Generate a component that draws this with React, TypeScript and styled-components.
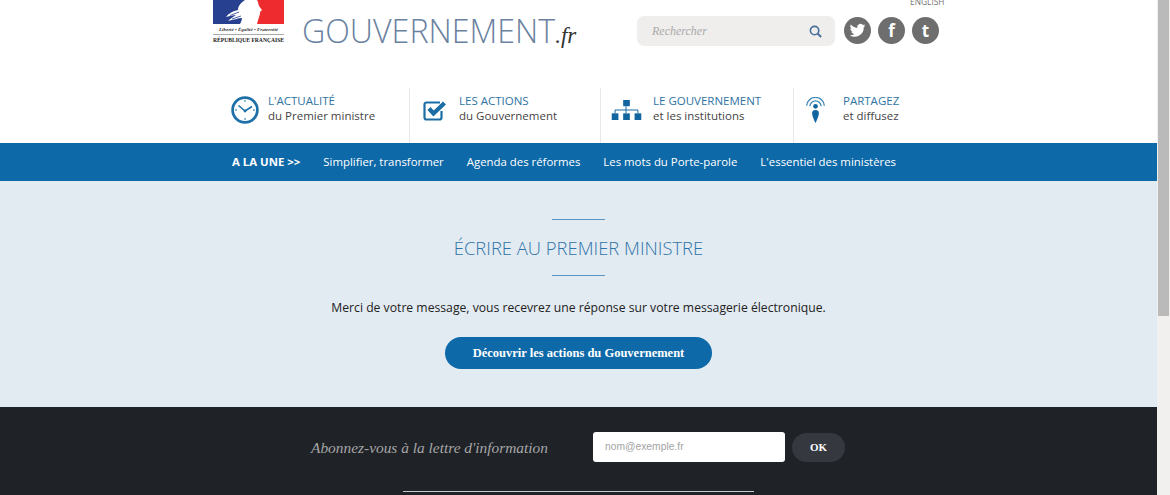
import React from "react";
import styled, { createGlobalStyle } from "styled-components";

const GlobalStyle = createGlobalStyle`
  html, body {
    margin: 0;
    padding: 0;
    height: 495px;
    overflow: hidden;
    background: #fff;
  }
  body {
    font-family: "Open Sans", "Liberation Sans", sans-serif;
  }
`;

const SANS = `"Open Sans", "Liberation Sans", sans-serif`;
const SERIF = `"Liberation Serif", "DejaVu Serif", serif`;

const navItems = [
  { title: "L'ACTUALITÉ", sub: "du Premier ministre", icon: "clock", width: 196, pad: 18, iconWidth: 28, gap: 9 },
  { title: "LES ACTIONS", sub: "du Gouvernement", icon: "check", width: 191, pad: 13, iconWidth: 24, gap: 12 },
  { title: "LE GOUVERNEMENT", sub: "et les institutions", icon: "org", width: 193, pad: 10, iconWidth: 31, gap: 11 },
  { title: "PARTAGEZ", sub: "et diffusez", icon: "share", width: 200, pad: 11, iconWidth: 21, gap: 17 },
];

const subLinks = [
  "Simplifier, transformer",
  "Agenda des réformes",
  "Les mots du Porte-parole",
  "L'essentiel des ministères",
];

const NavIcon = ({ name }: { name: string }) => {
  if (name === "clock") {
    return (
      <svg width="28" height="28" viewBox="0 0 28 28" fill="none" stroke="#1e71a8">
        <circle cx="14" cy="14" r="12.4" strokeWidth="2.7" />
        <path d="M14 15 L7.5 9.5 M14 15 L21 10.5" strokeWidth="1.6" />
        <circle cx="14" cy="15" r="1.4" fill="#1e71a8" stroke="none" />
        <path d="M14 4v2M14 22v2M4 14h2M22 14h2" strokeWidth="1" />
      </svg>
    );
  }
  if (name === "check") {
    return (
      <svg width="24" height="24" viewBox="0 0 24 24" fill="none">
        <path d="M18.5 13v6.500a2 2 0 0 1-2 2H3.500a2 2 0 0 1-2-2V6.500a2 2 0 0 1 2-2H17" stroke="#1b6ea5" strokeWidth="2.2" />
        <path d="M6 10.500l4.500 5L21.500 5" stroke="#1b6ea5" strokeWidth="4.2" />
      </svg>
    );
  }
  if (name === "org") {
    return (
      <svg width="31" height="20" viewBox="0 0 31 21" fill="#12659f">
        <rect x="12" y="0" width="7" height="6.500" />
        <rect x="0" y="14" width="7" height="7" />
        <rect x="12" y="14" width="7" height="7" />
        <rect x="24" y="14" width="7" height="7" />
        <path d="M15 6.500v7.500M3.500 14v-3.500h24V14" fill="none" stroke="#12659f" strokeWidth="1" />
      </svg>
    );
  }
  return (
    <svg width="21" height="27" viewBox="0 0 21 29" fill="none">
      <path d="M1 9.500a9.500 9 0 0 1 19 0" stroke="#3f86b5" strokeWidth="1.4" />
      <path d="M4.500 10a6 5.800 0 0 1 12 0" stroke="#3f86b5" strokeWidth="1.4" />
      <circle cx="10.5" cy="10" r="2.5" fill="#12659f" />
      <path d="M10.500 14c2.700 0 4 1.700 3.600 4.200-.4 2.800-2.200 7-3.600 9.800-1.400-2.800-3.200-7-3.600-9.800C6.500 15.700 7.800 14 10.500 14z" fill="#12659f" />
    </svg>
  );
};

export default function App() {
  return (
    <>
      <GlobalStyle />
      <Screen>
        <Page>
          <TopBar>
            <Logo>
              <svg width="71" height="24" viewBox="0 0 71 24">
                <rect width="33" height="24" fill="#27408f" />
                <path d="M32 0C27 3 25 7 25 10 20 11 15 14 13 17 17 16 20 15 23 15 20 17 17 19 15 21 20 20 25 18 29 18 29 20 28 22 27 24H45V0Z" fill="#fff" />
                <path d="M17 15.500l9-3.500M19 19l9-3" stroke="#27408f" strokeWidth="0.8" />
                <path d="M44 0H71V24H44C45 20 46 17 47 14L47 12 49 10 46 6C45 3 45 1 44 0Z" fill="#ee2b2e" />
              </svg>
              <Motto>Liberté • Égalité • Fraternité</Motto>
              <Republic>RÉPUBLIQUE FRANÇAISE</Republic>
            </Logo>
            <SiteTitle>
              GOUVERNEMENT<SiteSuffix>.fr</SiteSuffix>
            </SiteTitle>
            <SearchBox>
              <SearchLabel>Rechercher</SearchLabel>
              <svg width="13" height="13" viewBox="0 0 14 14" fill="none" stroke="#4a6f99" strokeWidth="1.8">
                <circle cx="6" cy="6" r="4.500" />
                <path d="M9.500 9.500L13 13" strokeWidth="2.2" />
              </svg>
            </SearchBox>
            <Socials>
              <SocialCircle>
                <svg width="17" height="17" viewBox="0 0 24 24" fill="#fff">
                  <path d="M23 4.900c-.8.400-1.700.6-2.600.8.900-.6 1.600-1.400 2-2.500-.9.500-1.900.9-2.900 1.100a4.500 4.500 0 0 0-7.800 4.100C7.900 8.200 4.600 6.400 2.400 3.700c-1.200 2.100-.6 4.700 1.400 6-.7 0-1.400-.2-2-.6 0 2.200 1.500 4.100 3.600 4.500-.7.200-1.400.2-2 .1.600 1.800 2.300 3.100 4.200 3.100A9.100 9.100 0 0 1 1 18.700a12.900 12.900 0 0 0 19.800-11.400c.9-.6 1.600-1.400 2.200-2.400z" />
                </svg>
              </SocialCircle>
              <SocialCircle>
                <SocialGlyph>f</SocialGlyph>
              </SocialCircle>
              <SocialCircle>
                <SocialGlyph>t</SocialGlyph>
              </SocialCircle>
            </Socials>
            <English>ENGLISH</English>
          </TopBar>

          <MainNav>
            {navItems.map((item, i) => (
              <NavItem key={item.title} $width={item.width} $pad={item.pad} $gap={item.gap} $bordered={i > 0}>
                <NavIconBox $width={item.iconWidth}>
                  <NavIcon name={item.icon} />
                </NavIconBox>
                <NavText>
                  <NavTitle>{item.title}</NavTitle>
                  <NavSub>{item.sub}</NavSub>
                </NavText>
              </NavItem>
            ))}
          </MainNav>

          <SubNav>
            <SubNavLead>A LA UNE &gt;&gt;</SubNavLead>
            {subLinks.map((link) => (
              <SubNavLink key={link}>{link}</SubNavLink>
            ))}
          </SubNav>

          <Message>
            <Rule />
            <MessageTitle>ÉCRIRE AU PREMIER MINISTRE</MessageTitle>
            <Rule />
            <MessageText>
              Merci de votre message, vous recevrez une réponse sur votre messagerie électronique.
            </MessageText>
            <ActionButton>Découvrir les actions du Gouvernement</ActionButton>
          </Message>

          <Footer>
            <Newsletter>
              <NewsletterLabel>Abonnez-vous à la lettre d'information</NewsletterLabel>
              <EmailInput>nom@exemple.fr</EmailInput>
              <OkButton>OK</OkButton>
            </Newsletter>
            <FooterRule />
          </Footer>
        </Page>
        <Scrollbar>
          <ScrollThumb />
        </Scrollbar>
      </Screen>
    </>
  );
}

const Screen = styled.div`
  display: flex;
  width: 1170px;
  height: 495px;
  overflow: hidden;
`;

const Page = styled.div`
  flex: 0 0 1157px;
  display: flex;
  flex-direction: column;
  height: 495px;
`;

const Scrollbar = styled.div`
  flex: 1;
  background: #f1f0ef;
`;

const ScrollThumb = styled.div`
  width: 11px;
  margin-left: 1px;
  height: 316px;
  background: #bababa;
`;

const TopBar = styled.div`
  position: relative;
  flex: 0 0 88px;
  display: flex;
  align-items: flex-start;
  padding-left: 213px;
  box-sizing: border-box;
`;

const Logo = styled.div`
  flex: 0 0 71px;
  min-width: 0;
  display: flex;
  flex-direction: column;
  align-items: stretch;

  svg {
    display: block;
  }
`;

const Motto = styled.div`
  margin-top: 2px;
  padding-bottom: 1px;
  border-bottom: 1px solid #aaa;
  font: italic bold 5px/7px ${SERIF};
  color: #333;
  white-space: nowrap;
  text-align: center;
`;

const Republic = styled.div`
  margin-top: 2px;
  font: bold 5.6px/7px ${SERIF};
  color: #222;
  white-space: nowrap;
  text-align: center;
`;

const SiteTitle = styled.div`
  flex: 0 0 353px;
  box-sizing: border-box;
  padding: 9px 0 0 18px;
  font: 300 32.2px/44px ${SANS};
  color: #6a82a0;
  white-space: nowrap;
`;

const SiteSuffix = styled.span`
  font: italic 23px/44px ${SERIF};
  color: #333;
`;

const SearchBox = styled.div`
  flex: 0 0 198px;
  height: 30px;
  margin-top: 16px;
  box-sizing: border-box;
  padding: 0 13px 0 15px;
  display: flex;
  align-items: center;
  justify-content: space-between;
  background: #efeeed;
  border-radius: 7px;
`;

const SearchLabel = styled.span`
  font: italic 12px/1 ${SERIF};
  color: #a9a9a9;
`;

const Socials = styled.div`
  display: flex;
  gap: 7px;
  margin: 17px 0 0 9px;
`;

const SocialCircle = styled.div`
  width: 27px;
  height: 27px;
  border-radius: 50%;
  background: #6e6e6e;
  display: flex;
  align-items: center;
  justify-content: center;
`;

const SocialGlyph = styled.span`
  font: bold 17px/1 ${SANS};
  color: #fff;
`;

const English = styled.div`
  position: absolute;
  left: 910px;
  top: -4px;
  font: 400 8.4px/12px ${SANS};
  color: #777;
`;

const MainNav = styled.nav`
  flex: 0 0 55px;
  display: flex;
  padding-left: 213px;
`;

const NavItem = styled.div<{ $width: number; $pad: number; $gap: number; $bordered: boolean }>`
  flex: 0 0 ${(p) => p.$width}px;
  box-sizing: border-box;
  display: flex;
  align-items: flex-start;
  gap: ${(p) => p.$gap}px;
  padding: 5px 0 0 ${(p) => p.$pad}px;
  border-left: ${(p) => (p.$bordered ? "1px solid #e8e8e8" : "none")};
`;

const NavIconBox = styled.div<{ $width: number }>`
  flex: 0 0 ${(p) => p.$width}px;
  height: 32px;
  margin-top: 1px;
  display: flex;
  align-items: center;
  justify-content: center;
`;

const NavText = styled.div`
  font-size: 11.5px;
  line-height: 15px;
  white-space: nowrap;
`;

const NavTitle = styled.div`
  color: #2f74a3;
`;

const NavSub = styled.div`
  color: #444;
`;

const SubNav = styled.div`
  flex: 0 0 38px;
  display: flex;
  align-items: center;
  gap: 23px;
  padding: 0 0 1px 232px;
  box-sizing: border-box;
  background: #0e69a8;
  color: #fff;
  font-size: 11.4px;
  white-space: nowrap;
`;

const SubNavLead = styled.span`
  flex: 0 0 68px;
  font-weight: 700;
  font-size: 11.4px;
`;

const SubNavLink = styled.span``;

const Message = styled.section`
  flex: 0 0 226px;
  box-sizing: border-box;
  padding-top: 38px;
  display: flex;
  flex-direction: column;
  align-items: center;
  background: #e3ebf2;
`;

const Rule = styled.div`
  width: 53px;
  height: 1px;
  background: #5a97c4;
`;

const MessageTitle = styled.h1`
  margin: 0;
  height: 55px;
  font: 300 18.4px/55px ${SANS};
  color: #2f74a8;
`;

const MessageText = styled.p`
  margin: 22px 0 0;
  font: 400 12.2px/20px ${SANS};
  color: #222;
`;

const ActionButton = styled.div`
  margin-top: 19px;
  width: 267px;
  height: 32px;
  display: flex;
  align-items: center;
  justify-content: center;
  border-radius: 16px;
  background: #0e69a8;
  color: #fff;
  font: bold 12.5px/1 ${SERIF};
`;

const Footer = styled.footer`
  flex: 1;
  display: flex;
  flex-direction: column;
  background: #1f2227;
`;

const Newsletter = styled.div`
  display: flex;
  align-items: center;
  height: 30px;
  margin-top: 25px;
  padding-left: 311px;
`;

const NewsletterLabel = styled.div`
  flex: 0 0 282px;
  padding-top: 2px;
  font: italic 15.4px/1 ${SERIF};
  color: #a6a6a6;
`;

const EmailInput = styled.div`
  flex: 0 0 192px;
  box-sizing: border-box;
  height: 30px;
  padding-left: 12px;
  display: flex;
  align-items: center;
  background: #fff;
  border-radius: 3px;
  font: 400 10.3px/1 "Liberation Sans", sans-serif;
  color: #a3a3a3;
`;

const OkButton = styled.div`
  flex: 0 0 53px;
  height: 29px;
  margin-left: 7px;
  display: flex;
  align-items: center;
  justify-content: center;
  border-radius: 15px;
  background: #35383e;
  color: #fff;
  font: bold 11px/1 ${SERIF};
`;

const FooterRule = styled.div`
  width: 351px;
  height: 1px;
  margin: 29px 0 0 403px;
  background: #c8c8c8;
`;
